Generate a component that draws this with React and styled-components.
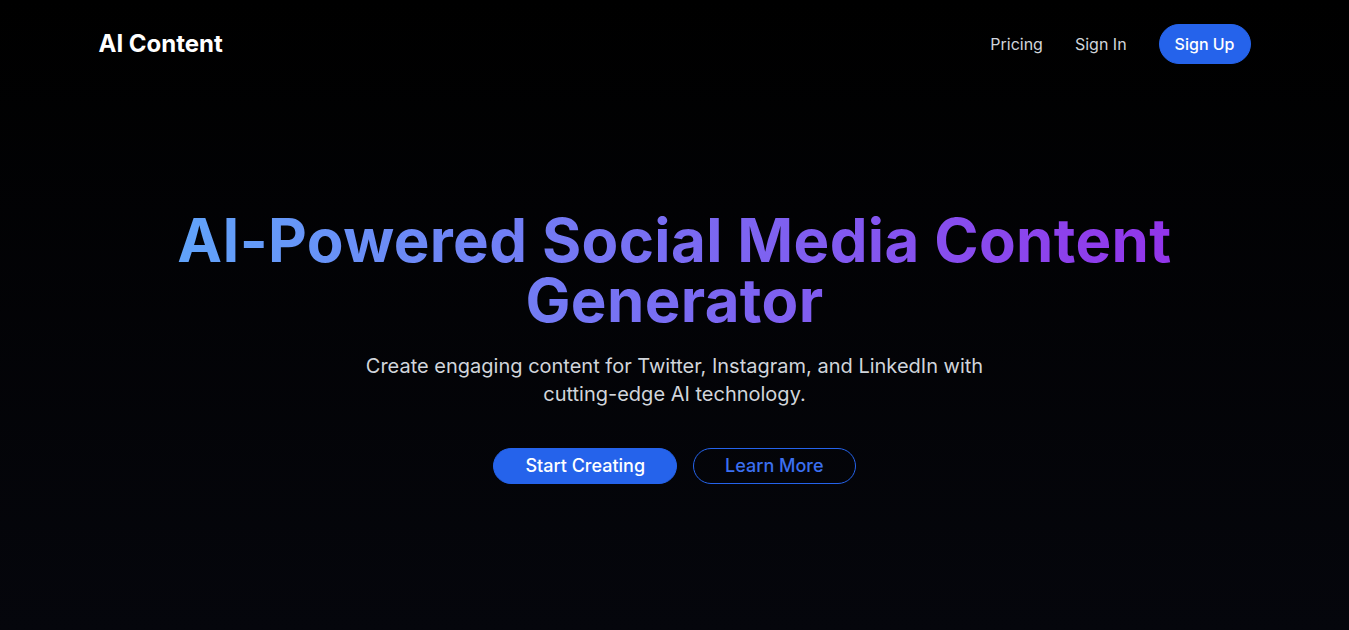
import React from "react";
import styled, { createGlobalStyle } from "styled-components";

const Global = createGlobalStyle`
  html, body { margin: 0; padding: 0; }
  body {
    font-family: Inter, "Noto Sans", sans-serif;
    background: #000;
    -webkit-font-smoothing: antialiased;
  }
  * { box-sizing: border-box; }
`;

const Page = styled.div`
  min-height: 630px;
  background: linear-gradient(to bottom, #000000, #05060c);
  color: #fff;
`;

const Header = styled.header`
  width: 1152px;
  margin: 0 auto;
  height: 88px;
  display: flex;
  align-items: center;
  justify-content: space-between;
`;

const Logo = styled.div`
  font-size: 24px;
  line-height: 32px;
  font-weight: 700;
  color: #fff;
`;

const Nav = styled.nav`
  display: flex;
  align-items: center;
  gap: 32px;
`;

const NavLink = styled.a`
  font-size: 16px;
  line-height: 24px;
  color: #d1d5db;
  text-decoration: none;
`;

const PillButton = styled.button`
  font-family: inherit;
  font-size: ${(p) => (p.$large ? "18px" : "16px")};
  line-height: ${(p) => (p.$large ? "28px" : "24px")};
  font-weight: 500;
  padding: ${(p) => (p.$large ? "3px 31px" : "7px 15px")};
  border-radius: 9999px;
  cursor: pointer;
  background: ${(p) => (p.$outline ? "transparent" : "#2563eb")};
  color: ${(p) => (p.$outline ? "#3b6ff0" : "#fff")};
  border: 1px solid #2563eb;
`;

const Hero = styled.main`
  display: flex;
  flex-direction: column;
  align-items: center;
  text-align: center;
  padding-top: 122px;
`;

const Title = styled.h1`
  margin: 0 0 22px;
  width: 1024px;
  font-size: 60px;
  line-height: 60px;
  font-weight: 700;
  letter-spacing: 0.35px;
  background: linear-gradient(to right, #60a5fa, #9333ea);
  -webkit-background-clip: text;
  background-clip: text;
  color: transparent;
`;

const Lead = styled.p`
  margin: 0 0 40px;
  max-width: 672px;
  font-size: 20px;
  line-height: 28px;
  color: #d1d5db;
`;

const Actions = styled.div`
  display: flex;
  gap: 16px;
`;

export default function App() {
  return (
    <>
      <Global />
      <Page>
        <Header>
          <Logo>AI Content</Logo>
          <Nav>
            <NavLink href="#">Pricing</NavLink>
            <NavLink href="#">Sign In</NavLink>
            <PillButton>Sign Up</PillButton>
          </Nav>
        </Header>
        <Hero>
          <Title>AI-Powered Social Media Content Generator</Title>
          <Lead>
            Create engaging content for Twitter, Instagram, and LinkedIn with
            cutting-edge AI technology.
          </Lead>
          <Actions>
            <PillButton $large>Start Creating</PillButton>
            <PillButton $large $outline>Learn More</PillButton>
          </Actions>
        </Hero>
      </Page>
    </>
  );
}
